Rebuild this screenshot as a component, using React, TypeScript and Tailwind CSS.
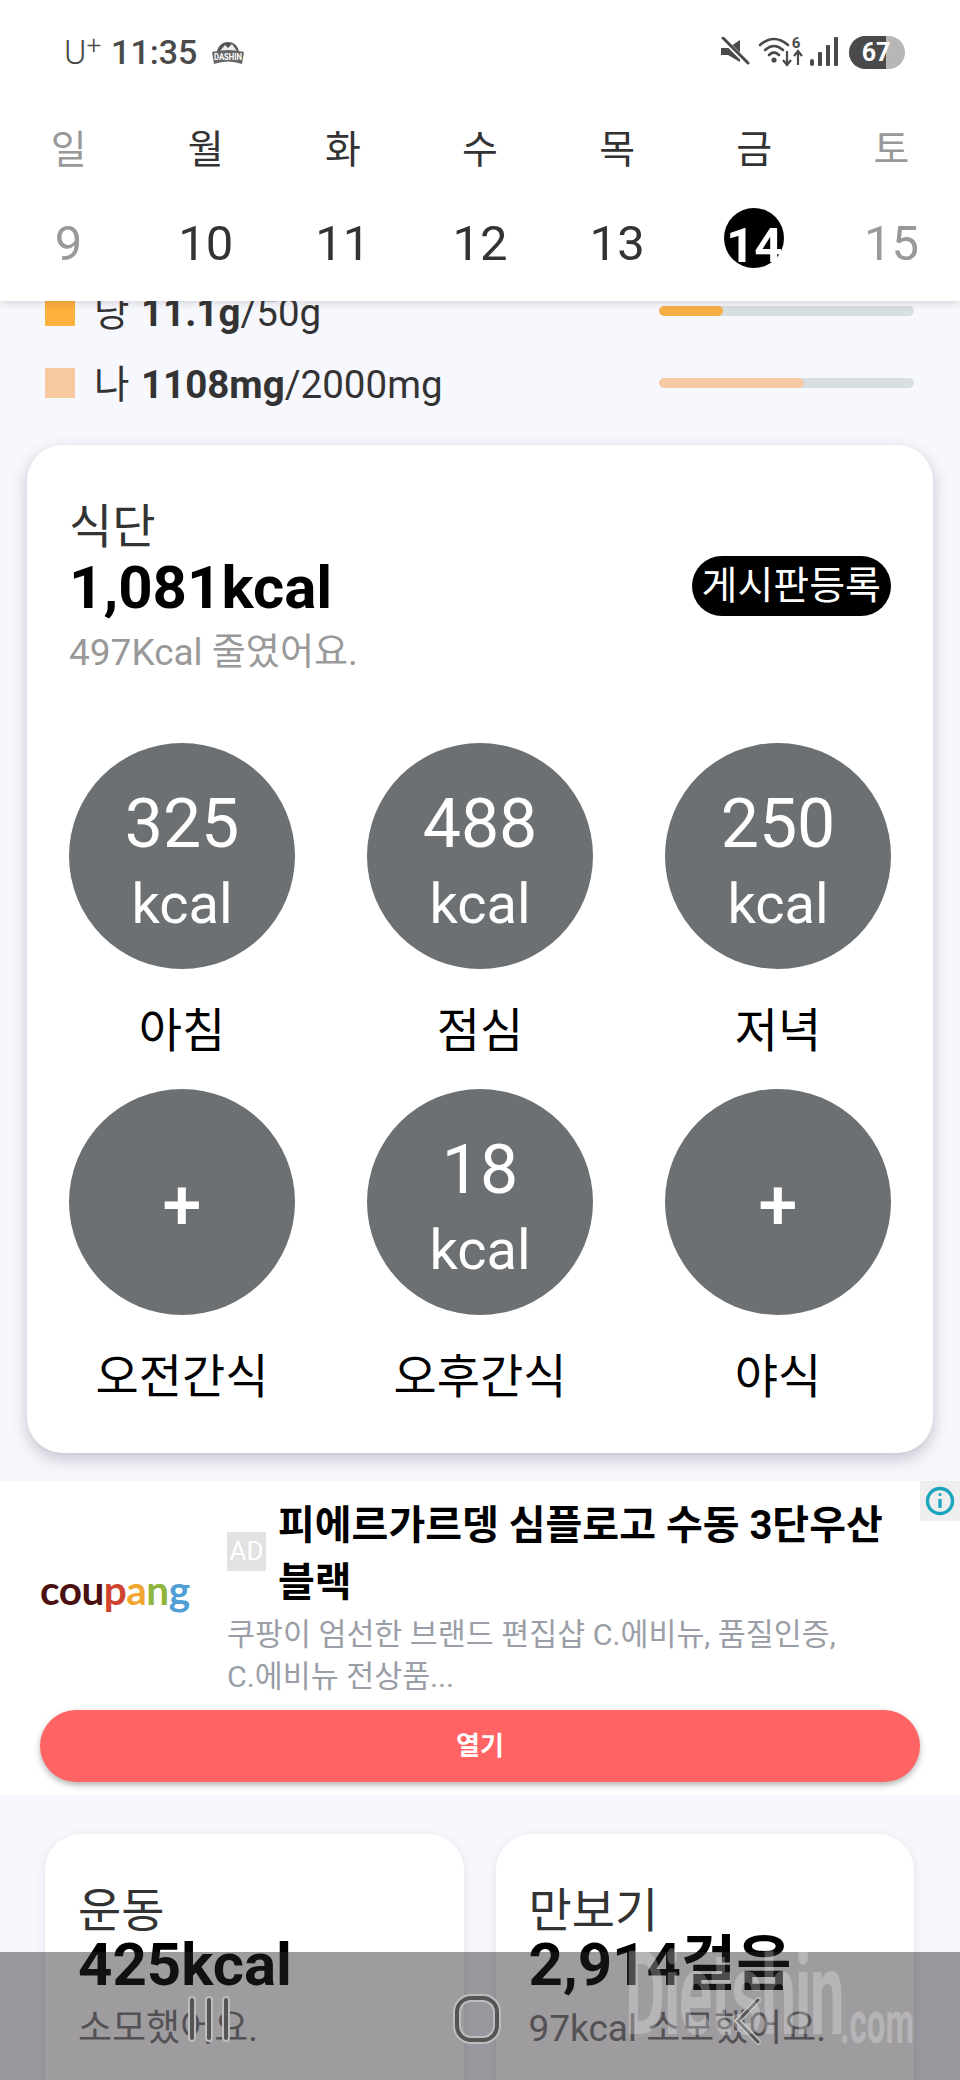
const weekdays = [
  { day: "일", date: "9", muted: true },
  { day: "월", date: "10" },
  { day: "화", date: "11" },
  { day: "수", date: "12" },
  { day: "목", date: "13" },
  { day: "금", date: "14", active: true },
  { day: "토", date: "15", muted: true },
];

const meals = [
  { label: "아침", kcal: "325" },
  { label: "점심", kcal: "488" },
  { label: "저녁", kcal: "250" },
  { label: "오전간식" },
  { label: "오후간식", kcal: "18" },
  { label: "야식" },
];

function DashinLogo() {
  return (
    <svg width="36" height="28" viewBox="0 0 36 28" className="ml-[13px]">
      <path d="M7 15 A11 11 0 0 1 29 15 Z" fill="#555" />
      <path d="M10 13 L15 7 L18 10 L22 6 L27 13 Z" fill="#eee" />
      <path d="M2 14 Q18 10 34 14 L32 26 Q18 21 4 26 Z" fill="#666" />
      <text x="18" y="22" textAnchor="middle" fontSize="8.5" fontWeight="700" fill="#fff" fontFamily="Roboto, sans-serif" textLength="28" lengthAdjust="spacingAndGlyphs">
        DASHIN
      </text>
    </svg>
  );
}

function StatusIcons() {
  return (
    <div className="flex items-center">
      {/* mute */}
      <svg width="30" height="30" viewBox="0 0 30 30">
        <path d="M1 11 H8 L20 3 V25 L8 18 H1 Z" fill="#4a4a4a" />
        <path d="M3 2 L28 27" stroke="#fff" strokeWidth="5" />
        <path d="M3 1 L28 26" stroke="#4a4a4a" strokeWidth="3" strokeLinecap="round" />
      </svg>
      {/* wifi + 6 */}
      <svg width="46" height="36" viewBox="0 0 46 36" className="ml-[8px]">
        <g fill="none" stroke="#4a4a4a" strokeWidth="2.6" strokeLinecap="round">
          <path d="M2 11 Q16 -1 30 11" />
          <path d="M7 16 Q16 8 25 16" />
          <path d="M11 21 Q16 16 21 21" />
        </g>
        <circle cx="16" cy="26" r="2.6" fill="#4a4a4a" />
        <text x="38" y="14" textAnchor="middle" fontSize="15" fontWeight="700" fill="#4a4a4a" fontFamily="Roboto, sans-serif">6</text>
        <g fill="none" stroke="#4a4a4a" strokeWidth="2.2">
          <path d="M29 17 V31 M25 26 L29 31 L33 26" />
          <path d="M40 31 V17 M36 22 L40 17 L44 22" />
        </g>
      </svg>
      {/* signal */}
      <svg width="28" height="30" viewBox="0 0 28 30" className="ml-[6px]">
        <g fill="#4a4a4a">
          <rect x="0" y="22" width="4" height="7" rx="2" />
          <rect x="8" y="15" width="4" height="14" rx="1" />
          <rect x="16" y="8" width="4" height="21" rx="1" />
          <rect x="24" y="0" width="4" height="29" rx="1" />
        </g>
      </svg>
      {/* battery */}
      <div className="ml-[11px] w-[56px] h-[33px] rounded-full bg-[#b7b7b7] overflow-hidden relative">
        <div className="w-[37px] h-full bg-[#4a4a4a]" />
        <span className="absolute inset-0 flex items-center justify-center text-[25px] font-bold text-white leading-none pr-[2px]">
          67
        </span>
      </div>
    </div>
  );
}

function NutrientRow({ name, amount, total, color, barClass }: { name: string; amount: string; total: string; color: string; barClass: string }) {
  return (
    <div className="h-[72px] flex items-center pl-[45px] pr-[46px]">
      <div className={`w-[30px] h-[30px] ${color}`} />
      <div className="ml-[19px] pt-[4px] text-[38.5px] leading-none text-[#333]">
        {name} <b className="ml-[2px] font-bold">{amount}</b>/{total}
      </div>
      <div className="ml-auto w-[255px] h-[10px] rounded-full bg-[#d8dfe0] overflow-hidden">
        <div className={`h-full rounded-full ${barClass}`} />
      </div>
    </div>
  );
}

function Meal({ label, kcal }: { label: string; kcal?: string }) {
  return (
    <div className="flex flex-col items-center">
      <div className="w-[226px] h-[226px] rounded-full bg-[#6c7072] text-white flex flex-col items-center justify-center pt-[16px]">
        {kcal ? (
          <>
            <span className="text-[68px] leading-[80px]">{kcal}</span>
            <span className="text-[56px] leading-[80px]">kcal</span>
          </>
        ) : (
          <span className="text-[70px] leading-none font-medium -mt-[11px]">+</span>
        )}
      </div>
      <div className="mt-[32px] mb-[28px] text-[47px] leading-[60px] text-black">{label}</div>
    </div>
  );
}

function StatCard({ title, value, sub }: { title: string; value: string; sub: string }) {
  return (
    <div className="h-[300px] rounded-[36px] bg-white shadow-[0_2px_10px_rgba(70,60,80,0.12)] pl-[33px] pt-[55px]">
      <div className="text-[47px] leading-[44px] text-[#333]">{title}</div>
      <div className="text-[60px] leading-[64px] font-bold text-black">{value}</div>
      <div className="mt-[10px] text-[37px] leading-[44px] text-[#777]">{sub}</div>
    </div>
  );
}

export default function App() {
  return (
    <div className="relative h-[2080px] overflow-hidden bg-[#f7f8fd] font-['Roboto','Noto_Sans_CJK_KR',sans-serif]">
      {/* Header */}
      <header className="relative z-10 h-[301px] bg-white shadow-[0_2px_8px_rgba(90,70,80,0.2)]">
        <div className="h-[104px] flex items-center justify-between pl-[64px] pr-[55px]">
          <div className="flex items-center text-[#4a4a4a]">
            <span className="text-[34px] font-light leading-none">
              U<sup className="text-[26px] top-[-10px]">+</sup>
            </span>
            <span className="ml-[10px] text-[34px] font-medium leading-none">11:35</span>
            <DashinLogo />
          </div>
          <StatusIcons />
        </div>
        <div className="grid grid-cols-7 text-center">
          {weekdays.map((w) => (
            <div key={w.day} className={`text-[39px] leading-[93px] ${w.muted ? "text-[#999]" : "text-[#333]"}`}>
              {w.day}
            </div>
          ))}
        </div>
        <div className="grid grid-cols-7 text-center">
          {weekdays.map((w) =>
            w.active ? (
              <div key={w.date} className="h-[94px] flex items-start justify-center pt-[11px]">
                <div className="w-[60px] h-[60px] rounded-full bg-black text-white font-bold text-[49px] leading-[76px]">{w.date}</div>
              </div>
            ) : (
              <div key={w.date} className={`text-[49px] leading-[94px] ${w.muted ? "text-[#999]" : "text-[#333]"}`}>
                {w.date}
              </div>
            )
          )}
        </div>
      </header>

      {/* Nutrients, scrolled under the header */}
      <section className="-mt-[26px] pb-[26px]">
        <NutrientRow name="당" amount="11.1g" total="50g" color="bg-[#fdb13c]" barClass="w-[64px] bg-[#f7ae45]" />
        <NutrientRow name="나" amount="1108mg" total="2000mg" color="bg-[#f8c9a0]" barClass="w-[145px] bg-[#f6c8a3]" />
      </section>

      {/* Meals */}
      <section className="mx-[27px] h-[1008px] rounded-[36px] bg-white shadow-[0_6px_16px_rgba(60,55,80,0.28)] pt-[60px] pl-[42px] pr-[42px]">
        <div className="text-[47px] leading-[44px] text-[#333]">식단</div>
        <div className="flex items-center justify-between">
          <div className="text-[60px] leading-[70px] font-bold text-black pt-[4px]">1,081kcal</div>
          <div className="h-[60px] px-[10px] flex items-center rounded-full bg-black text-white text-[39px] leading-none">게시판등록</div>
        </div>
        <div className="mt-[8px] text-[37px] leading-[44px] text-[#999]">497Kcal 줄였어요.</div>
        <div className="mt-[68px] grid grid-cols-[226px_226px_226px] justify-between">
          {meals.map((m) => (
            <Meal key={m.label} label={m.label} kcal={m.kcal} />
          ))}
        </div>
      </section>

      {/* Ad */}
      <section className="relative mt-[28px] h-[314px] bg-white pt-[16px] px-[40px]">
        <div className="absolute top-0 right-0 w-[40px] h-[40px] bg-[#eeeeee] flex items-center justify-center">
          <svg width="30" height="30" viewBox="0 0 30 30" fill="none" stroke="#1aa5bd">
            <circle cx="15" cy="15" r="12.5" strokeWidth="3.4" />
            <path d="M15 13 V22" strokeWidth="3.4" />
            <circle cx="15" cy="8.5" r="1.6" fill="#1aa5bd" stroke="none" />
          </svg>
        </div>
        <div className="flex">
          <div className="w-[150px] shrink-0 self-center font-['Lato',sans-serif] font-bold text-[40.5px] leading-none tracking-[-0.5px] -mt-[15px]">
            <span className="text-[#4a1010]">cou</span>
            <span className="text-[#d0432f]">p</span>
            <span className="text-[#f0a62f]">a</span>
            <span className="text-[#8fb53d]">n</span>
            <span className="text-[#4f9fd6]">g</span>
          </div>
          <div className="ml-[37px]">
            <div className="flex items-center">
              <div className="w-[39px] h-[39px] shrink-0 bg-[#e2e2e2] text-white text-[26px] flex items-center justify-center -mt-[5px]">AD</div>
              <div className="ml-[12px] w-[630px] text-[40px] leading-[57px] font-bold text-black">피에르가르뎅 심플로고 수동 3단우산 블랙</div>
            </div>
            <div className="mt-[3px] w-[625px] text-[30.4px] leading-[42px] text-[#9a9ea6]">쿠팡이 엄선한 브랜드 편집샵 C.에비뉴, 품질인증, C.에비뉴 전상품...</div>
          </div>
        </div>
        <div className="mt-[12px] h-[72px] rounded-full bg-[#ff6363] shadow-[0_3px_6px_rgba(0,0,0,0.3)] flex items-center justify-center text-white text-[26px] font-bold">열기</div>
      </section>

      {/* Activity */}
      <section className="pt-[39px] pl-[45px] pr-[46px] grid grid-cols-2 gap-[32px]">
        <StatCard title="운동" value="425kcal" sub="소모했어요." />
        <StatCard title="만보기" value="2,914걸음" sub="97kcal 소모했어요." />
      </section>

      {/* Android nav bar, translucent over the page */}
      <div className="absolute left-0 right-0 bottom-0 h-[128px] bg-[rgba(40,35,42,0.45)]">
        <svg width="960" height="128" viewBox="0 0 960 128" fill="none" className="absolute inset-0">
          <g stroke="#bdbdbd" strokeWidth="8" strokeLinecap="round">
            <path d="M192 48 V86 M209 48 V86 M226 48 V86" />
            <rect x="457" y="46" width="40" height="42" rx="14" strokeWidth="8" />
            <path d="M758 48 L738 69 L758 90" strokeWidth="6" />
          </g>
          <g stroke="#555" strokeWidth="4" strokeLinecap="round">
            <path d="M192 48 V86 M209 48 V86 M226 48 V86" />
            <rect x="457" y="46" width="40" height="42" rx="14" />
            <path d="M758 48 L738 69 L758 90" strokeWidth="3" />
          </g>
        </svg>
      </div>

      {/* Watermark */}
      <div className="absolute left-[625px] top-[1936px] flex items-end text-white/25 font-bold leading-none pointer-events-none">
        <span className="text-[116px] origin-left w-[212px] [transform:scaleX(0.53)] tracking-[-2px]">Dietshin</span>
        <span className="text-[60px] origin-left [transform:scaleX(0.55)] -mb-[1px] ml-[3px]">.com</span>
      </div>
    </div>
  );
}
